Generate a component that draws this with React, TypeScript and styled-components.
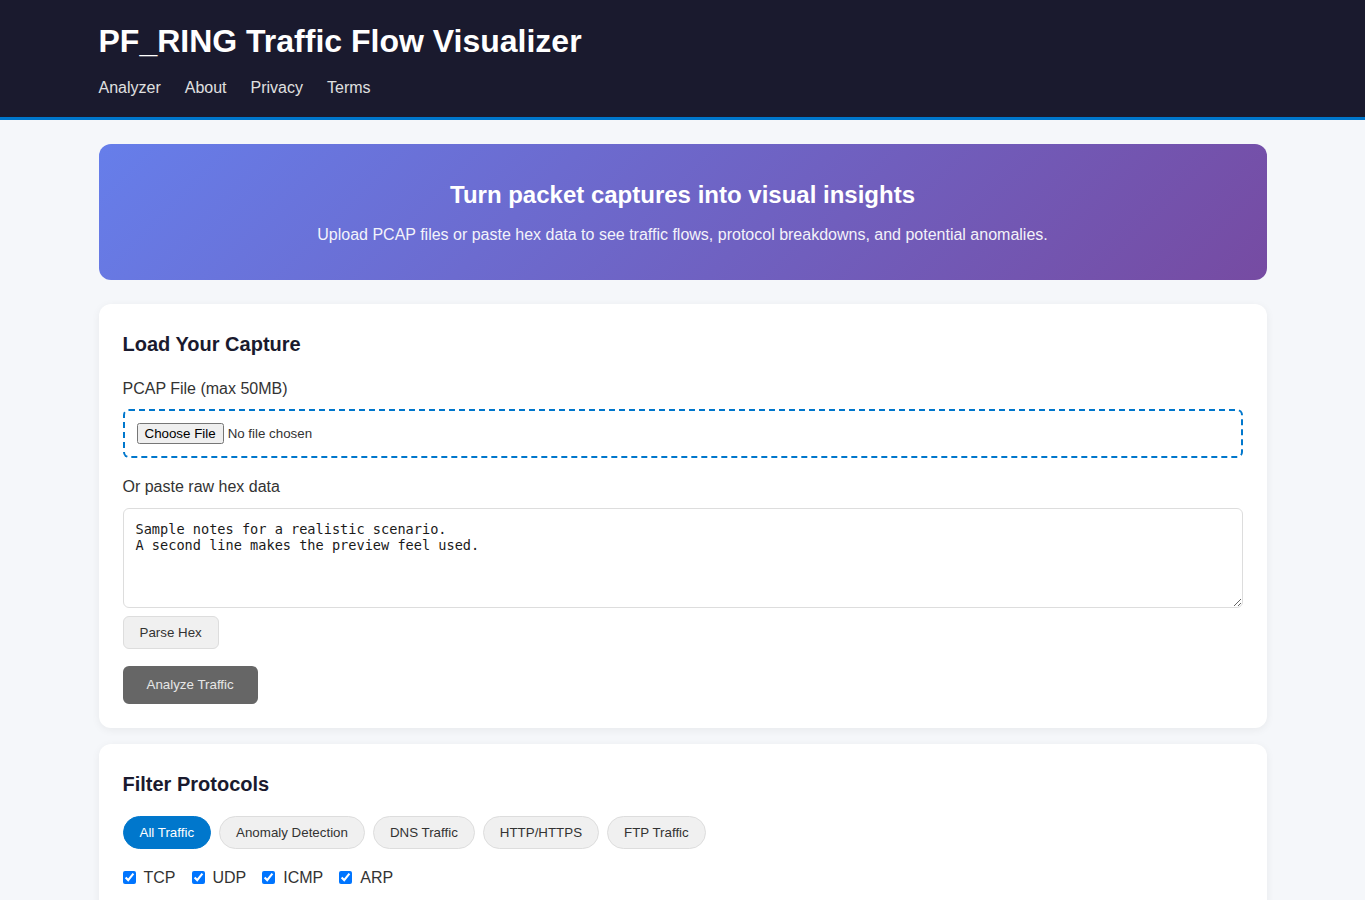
import React, { useState } from 'react'
import styled, { createGlobalStyle } from 'styled-components'

const GlobalStyle = createGlobalStyle`
    * {
        box-sizing: border-box;
    }

    body {
        margin: 0;
        font-family: "Liberation Sans", Arial, sans-serif;
        font-size: 16px;
        line-height: 1.6;
        color: #1a1a2e;
        background-color: #f5f7fa;
    }
`

const filters = ['All Traffic', 'Anomaly Detection', 'DNS Traffic', 'HTTP/HTTPS', 'FTP Traffic']
const protocols = ['TCP', 'UDP', 'ICMP', 'ARP']

export default function App() {
    const [active, setActive] = useState('All Traffic')
    const [hex, setHex] = useState(
        'Sample notes for a realistic scenario.\nA second line makes the preview feel used.'
    )

    return (
        <>
            <GlobalStyle />
            <Header>
                <Container>
                    <Title>PF_RING Traffic Flow Visualizer</Title>
                    <Nav>
                        <NavLink href="#">Analyzer</NavLink>
                        <NavLink href="#">About</NavLink>
                        <NavLink href="#">Privacy</NavLink>
                        <NavLink href="#">Terms</NavLink>
                    </Nav>
                </Container>
            </Header>

            <Main>
                <Hero>
                    <HeroTitle>Turn packet captures into visual insights</HeroTitle>
                    <HeroText>
                        Upload PCAP files or paste hex data to see traffic flows, protocol breakdowns, and potential anomalies.
                    </HeroText>
                </Hero>

                <Card>
                    <CardTitle>Load Your Capture</CardTitle>
                    <Label htmlFor="pcap">PCAP File (max 50MB)</Label>
                    <DropZone>
                        <FileInput id="pcap" type="file" accept=".pcap,.pcapng" />
                    </DropZone>

                    <Label htmlFor="hex">Or paste raw hex data</Label>
                    <HexArea id="hex" value={hex} onChange={e => setHex(e.target.value)} />
                    <SecondaryButton type="button">Parse Hex</SecondaryButton>
                    <PrimaryButton type="button" disabled>Analyze Traffic</PrimaryButton>
                </Card>

                <Card>
                    <CardTitle>Filter Protocols</CardTitle>
                    <PillRow>
                        {filters.map(f => (
                            <Pill key={f} $active={f === active} onClick={() => setActive(f)}>
                                {f}
                            </Pill>
                        ))}
                    </PillRow>
                    <CheckRow>
                        {protocols.map(p => (
                            <CheckLabel key={p}>
                                <input type="checkbox" defaultChecked />
                                {p}
                            </CheckLabel>
                        ))}
                    </CheckRow>
                </Card>
            </Main>
        </>
    )
}

const Header = styled.header`
    background-color: #1a1a2e;
    border-bottom: 3px solid #0077cc;
    padding: 23px 0 14px;
`
const Container = styled.div`
    max-width: 1200px;
    margin: 0 auto;
    padding: 0 16px;
`
const Title = styled.h1`
    margin: 0 0 13px;
    font-size: 32px;
    line-height: 37px;
    font-weight: 700;
    color: #ffffff;
`
const Nav = styled.nav`
    display: flex;
    column-gap: 24px;
`
const NavLink = styled.a`
    font-size: 16px;
    color: #e0e0e0;
    text-decoration: none;
    padding: 2px 0;

    &:hover {
        color: #ffffff;
    }
`
const Main = styled.main`
    max-width: 1200px;
    margin: 0 auto;
    padding: 24px 16px;
`
const Hero = styled.section`
    padding: 32px;
    margin-bottom: 24px;
    border-radius: 12px;
    text-align: center;
    color: #ffffff;
    background: linear-gradient(135deg, #667eea 0%, #764ba2 100%);
`
const HeroTitle = styled.h2`
    margin: 0 0 8px;
    font-size: 24px;
    font-weight: 700;
`
const HeroText = styled.p`
    margin: 0;
    font-size: 16px;
    opacity: 0.92;
`
const Card = styled.section`
    display: flex;
    flex-direction: column;
    align-items: flex-start;
    background-color: #ffffff;
    border-radius: 12px;
    padding: 24px;
    margin-bottom: 16px;
    box-shadow: 0 2px 8px rgba(0, 0, 0, 0.06);
`
const CardTitle = styled.h2`
    margin: 0 0 16px;
    font-size: 20px;
    font-weight: 700;
    color: #1a1a2e;
`
const Label = styled.label`
    font-size: 16px;
    color: #333333;
    margin-bottom: 8px;
`
const DropZone = styled.div`
    align-self: stretch;
    border: 2px dashed #0077cc;
    border-radius: 6px;
    padding: 12px;
    margin-bottom: 16px;
    line-height: 20px;
`
const FileInput = styled.input`
    font-family: "Liberation Sans", Arial, sans-serif;
    font-size: 13.33px;
    color: #333333;
`
const HexArea = styled.textarea`
    align-self: stretch;
    height: 100px;
    padding: 12px;
    border: 1px solid #dddddd;
    border-radius: 6px;
    font-family: "DejaVu Sans Mono", monospace;
    font-size: 13.6px;
    line-height: 16.5px;
    color: #1a1a1a;
    resize: vertical;
    margin-bottom: 8px;
`
const SecondaryButton = styled.button`
    padding: 8px 16px;
    font-family: "Liberation Sans", Arial, sans-serif;
    font-size: 13.33px;
    line-height: 15px;
    color: #333333;
    background-color: #f0f0f0;
    border: 1px solid #dddddd;
    border-radius: 6px;
    cursor: pointer;
    margin-bottom: 17px;
`
const PrimaryButton = styled.button`
    padding: 12px 24px;
    font-family: "Liberation Sans", Arial, sans-serif;
    font-size: 13.33px;
    line-height: 14px;
    color: #e6e6e6;
    background-color: #666666;
    border: none;
    border-radius: 6px;

    &:disabled {
        cursor: not-allowed;
    }
`
const PillRow = styled.div`
    display: flex;
    flex-wrap: wrap;
    gap: 8px;
    margin-bottom: 16px;
`
const Pill = styled.button<{ $active?: boolean }>`
    padding: 8px 16px;
    font-family: "Liberation Sans", Arial, sans-serif;
    font-size: 13.33px;
    line-height: 15px;
    border-radius: 20px;
    border: 1px solid ${p => (p.$active ? '#0077cc' : '#dddddd')};
    background-color: ${p => (p.$active ? '#0077cc' : '#f0f0f0')};
    color: ${p => (p.$active ? '#ffffff' : '#333333')};
    cursor: pointer;
`
const CheckRow = styled.div`
    display: flex;
    flex-wrap: wrap;
    column-gap: 16px;
`
const CheckLabel = styled.label`
    display: inline-flex;
    align-items: center;
    column-gap: 8px;
    font-size: 16px;
    color: #333333;

    input {
        margin: 0;
        width: 13px;
        height: 13px;
    }
`
